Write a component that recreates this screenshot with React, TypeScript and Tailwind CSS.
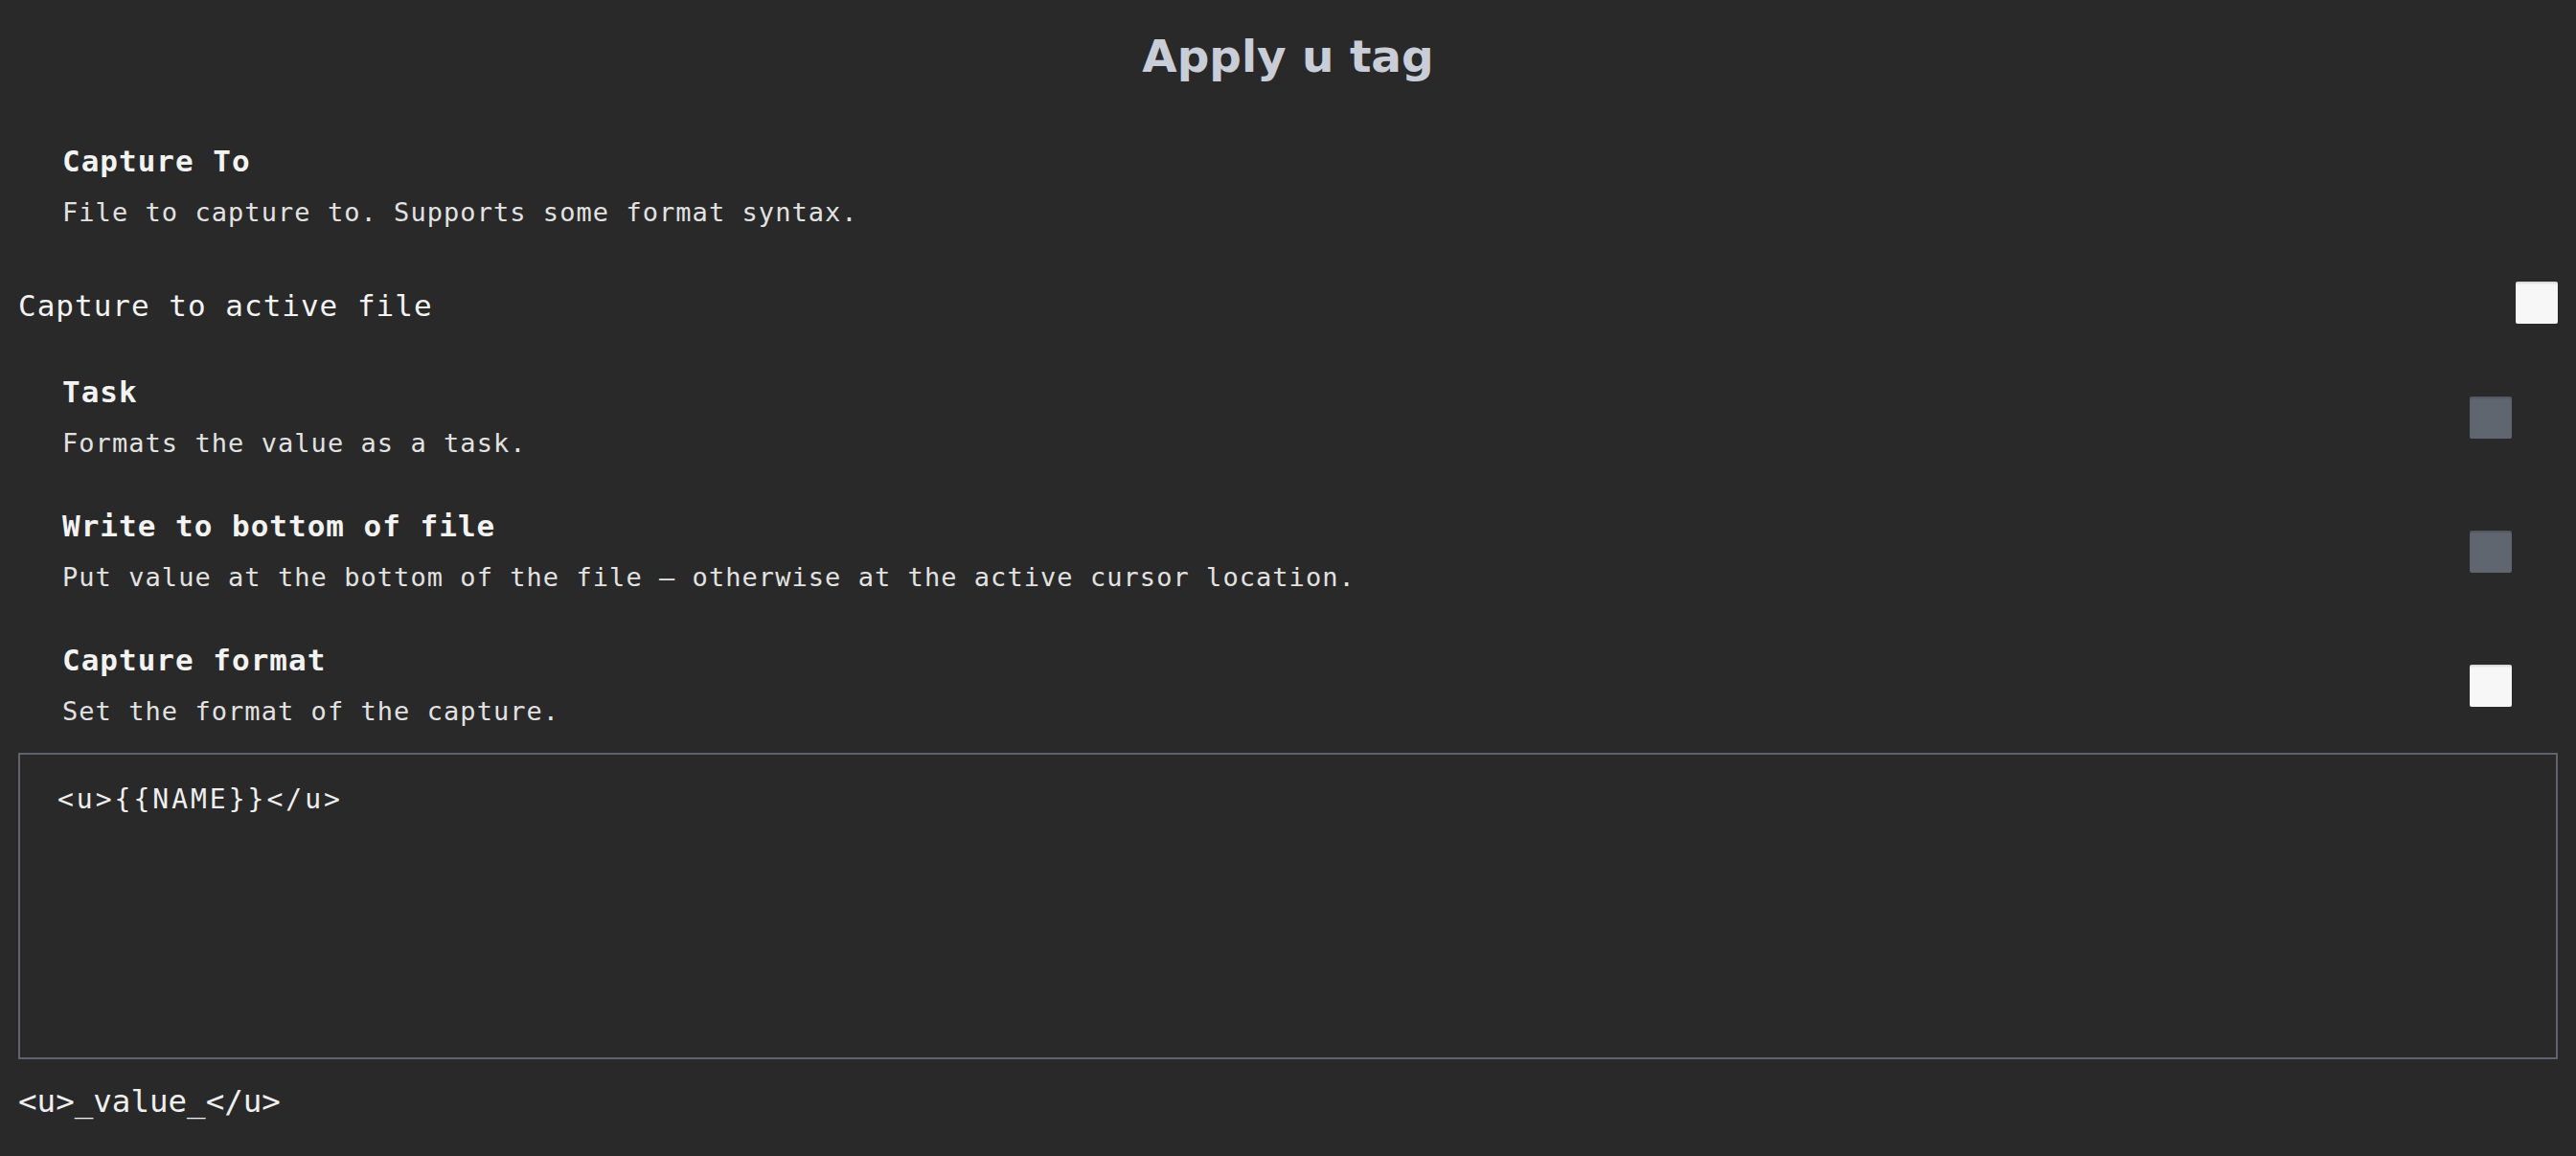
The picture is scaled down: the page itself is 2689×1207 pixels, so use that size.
import React from "react";

type Item = {
  name: string;
  desc: string;
  check?: "on" | "off";
};

const items: Item[] = [
  { name: "Task", desc: "Formats the value as a task.", check: "off" },
  {
    name: "Write to bottom of file",
    desc: "Put value at the bottom of the file — otherwise at the active cursor location.",
    check: "off",
  },
  { name: "Capture format", desc: "Set the format of the capture.", check: "on" },
];

const mono = "font-['DejaVu_Sans_Mono','Liberation_Mono',monospace]";

function Box({ on }: { on: boolean }) {
  return (
    <div
      className={
        on
          ? "w-[44px] h-[44px] shrink-0 rounded-[2px] bg-[#f7f7f7] shadow-[inset_0_2px_2px_rgba(0,0,0,0.12)]"
          : "w-[44px] h-[44px] shrink-0 rounded-[2px] bg-[#5f6670] shadow-[inset_0_2px_2px_rgba(0,0,0,0.15)]"
      }
    />
  );
}

function SettingItem({ name, desc, check }: Item) {
  return (
    <div className="h-[140px] flex items-center justify-between pl-[46px] pr-[48px]">
      <div className="flex flex-col">
        <div className={`${mono} text-[31px] leading-[40px] tracking-[1px] font-bold text-[#f3f3f3]`}>
          {name}
        </div>
        <div className={`${mono} mt-[14px] text-[27px] leading-[40px] tracking-[1.05px] text-[#e2e2e2]`}>
          {desc}
        </div>
      </div>
      {check && <Box on={check === "on"} />}
    </div>
  );
}

export default function App() {
  return (
    <div className="min-h-screen w-full bg-[#292929] px-[19px] pb-[40px]">
      <h1 className="pt-[35px] text-center font-['DejaVu_Sans','Verdana',sans-serif] text-[47px] leading-[48px] font-bold text-[#c9cdd8]">
        Apply u tag
      </h1>

      <div className="mt-[42px]">
        <SettingItem
          name="Capture To"
          desc="File to capture to. Supports some format syntax."
        />

        <div className="h-[101px] flex items-center justify-between">
          <span className={`${mono} pt-[7px] text-[31px] leading-[44px] tracking-[1px] text-[#f3f3f3]`}>
            Capture to active file
          </span>
          <Box on />
        </div>

        {items.map((it) => (
          <SettingItem key={it.name} {...it} />
        ))}
      </div>

      <textarea
        readOnly
        defaultValue="<u>{{NAME}}</u>"
        className={`${mono} block w-full h-[320px] resize-none border-2 border-[#5e646c] bg-transparent pl-[39px] pt-[27px] text-[28px] leading-[40px] tracking-[3px] text-[#efefef] outline-none`}
      />

      <div className={`${mono} mt-[24px] text-[32.5px] leading-[40px] text-[#efefef]`}>
        {"<u>_value_</u>"}
      </div>
    </div>
  );
}
